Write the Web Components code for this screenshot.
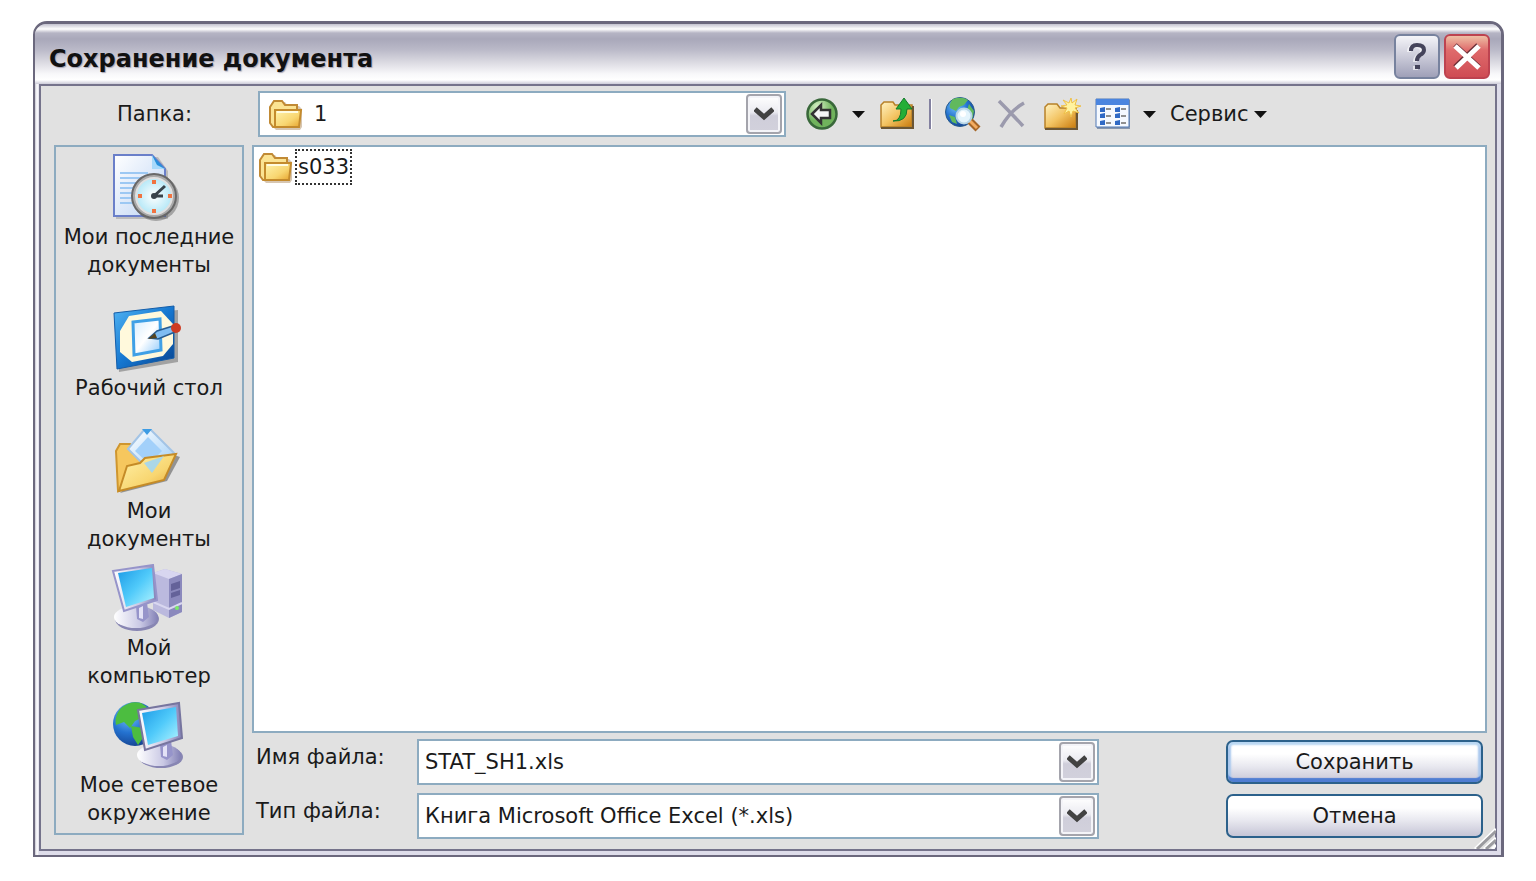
<!DOCTYPE html>
<html lang="ru">

<head>
  <meta charset="UTF-8">
  <meta name="viewport" content="width=device-width, initial-scale=1.0">
  <title>Сохранение документа</title>
  <style>
    body {
      margin: 0;
      padding: 21px 32px 24px 33px;
      box-sizing: border-box;
      min-height: 100vh;
      display: flex;
      background: #fff;
      color: #1a1a1a;
      font: 21px/28px "DejaVu Sans", sans-serif;
    }
  </style>
</head>

<body>
  <xp-dialog>
    <span slot="title">Сохранение документа</span>
    <xp-toolbar slot="toolbar"></xp-toolbar>
    <xp-places slot="places">
      <xp-place icon="recent">Мои последние<br>документы</xp-place>
      <xp-place icon="desktop">Рабочий стол</xp-place>
      <xp-place icon="documents">Мои<br>документы</xp-place>
      <xp-place icon="computer">Мой<br>компьютер</xp-place>
      <xp-place icon="network">Мое сетевое<br>окружение</xp-place>
    </xp-places>
    <xp-file-list slot="files">
      <xp-file>s033</xp-file>
    </xp-file-list>
    <xp-combo slot="fields" label="Имя файла:" value="STAT_SH1.xls" editable></xp-combo>
    <xp-button slot="actions" primary>Сохранить</xp-button>
    <xp-combo slot="fields" label="Тип файла:" value="Книга Microsoft Office Excel (*.xls)"></xp-combo>
    <xp-button slot="actions">Отмена</xp-button>
  </xp-dialog>

  <template id="dialog">
    <style>
      :host {
        flex: 1;
        display: flex;
        flex-direction: column;
        position: relative;
        box-sizing: border-box;
        border: 2px solid #6b687d;
        border-top-width: 3px;
        border-right-width: 3px;
        border-radius: 14px 14px 0 0;
        background: linear-gradient(to right, #c6c5d1, #fff 2px, #deddea 4px);
        padding: 0 4px 4px;
        overflow: hidden;
      }
      header {
        display: flex;
        align-items: center;
        gap: 4px;
        height: 60px;
        box-sizing: border-box;
        margin: 0 -4px;
        padding: 5px 11px 0 14px;
        background: linear-gradient(#c4c3d0, #fff 5px, #b5b4c4 9px, #a9a8ba 15px, #b9b8c7 25px, #dad9e1 38px, #f8f8fa 50px, #fff 56px, #cccbd8);
      }
      h1 {
        flex: 1;
        margin: 0;
        padding-top: 4px;
        font-size: 24px;
        line-height: 30px;
        font-weight: bold;
        color: #111;
        text-shadow: 1px 1px 1px #a3a2b3;
      }
      header button {
        width: 46px;
        height: 45px;
        padding: 0;
        border: 2px solid #77829e;
        border-radius: 6px;
        background: linear-gradient(#f4f4f8, #cfcfdc 45%, #9fa0b8);
      }
      header button.close {
        border-color: #bd4350;
        background: linear-gradient(#eebfa4, #df6a6b 35%, #cf4c54);
      }
      header svg { display: block; margin: auto; }
      main {
        flex: 1;
        display: grid;
        grid-template-columns: 190px 1fr;
        grid-template-rows: auto 1fr;
        column-gap: 8px;
        padding: 5px 8px 10px 13px;
        border: 2px solid #75738b;
        background: #e1e1e1;
      }
      .toolbar { grid-column: 1 / 3; padding-bottom: 8px; }
      .places { display: grid; margin-bottom: 4px; }
      .right { display: flex; flex-direction: column; gap: 6px; }
      .files { flex: 1; display: grid; }
      .bottom {
        display: grid;
        grid-template-columns: 1fr 257px;
        column-gap: 127px;
        padding: 0 4px;
      }
      .fields, .actions { display: flex; flex-direction: column; gap: 8px; }
      .grip { position: absolute; right: 5px; bottom: 6px; }
    </style>
    <header>
      <h1><slot name="title"></slot></h1>
      <button aria-label="Справка">
        <svg width="36" height="36" viewBox="0 0 36 36" fill="none" stroke-width="4">
          <path d="M12 12q0-6 6-6 7 0 7 5 0 3-4 5-3 2-3 6M16 28h5" stroke="#fff" transform="translate(-2 1)" opacity=".6" />
          <path d="M12 12q0-6 6-6 7 0 7 5 0 3-4 5-3 2-3 6M16 28h5" stroke="#45445b" />
        </svg>
      </button>
      <button class="close" aria-label="Закрыть">
        <svg width="36" height="36" viewBox="0 0 36 36" fill="none">
          <path d="M6 6l24 22M29 6L6 28" stroke="#6d3038" stroke-width="5" />
          <path d="M6 7l24 22M30 7L7 29" stroke="#fff" stroke-width="5" />
        </svg>
      </button>
    </header>
    <main>
      <div class="toolbar"><slot name="toolbar"></slot></div>
      <div class="places"><slot name="places"></slot></div>
      <div class="right">
        <div class="files"><slot name="files"></slot></div>
        <div class="bottom">
          <div class="fields"><slot name="fields"></slot></div>
          <div class="actions"><slot name="actions"></slot></div>
        </div>
      </div>
    </main>
    <svg class="grip" width="24" height="22" viewBox="0 0 24 22" fill="none">
      <path d="M3 22L24 2M12 22l12-11M20 22l4-4" stroke="#fff" stroke-width="3" />
      <path d="M5 22L24 4M14 22l10-9" stroke="#9b9b9f" stroke-width="3" />
    </svg>
  </template>

  <template id="toolbar">
    <style>
      :host { display: flex; }
      xp-combo { flex: 1; --label-width: 204px; --label-pad: 0 0 0 63px; --text-pad: 10px; }
      .tools {
        flex: 0 0 701px;
        box-sizing: border-box;
        padding-left: 20px;
        display: flex;
        align-items: center;
      }
      button {
        display: flex;
        align-items: center;
        padding: 0;
        border: 0;
        background: none;
        color: inherit;
        font: inherit;
      }
      .drop { margin-left: 12px; }
      .up { margin-left: 14px; }
      .search { margin-left: 12px; }
      .delete, .views { margin-left: 14px; }
      .new { margin-left: 16px; }
      .service { margin-left: 14px; gap: 6px; }
      hr { width: 1px; height: 30px; margin: 0 0 0 14px; border: solid; border-width: 0 1px; border-color: #fff #fff #fff #8381a0; background: #8381a0; }
    </style>
    <xp-combo label="Папка:" value="1"><xp-icon name="folder"></xp-icon></xp-combo>
    <div class="tools">
      <button aria-label="Назад"><xp-icon name="back"></xp-icon></button>
      <button class="drop" aria-label="Журнал"><xp-icon name="caret"></xp-icon></button>
      <button class="up" aria-label="На уровень вверх"><xp-icon name="up"></xp-icon></button>
      <hr>
      <button class="search" aria-label="Найти в Интернете"><xp-icon name="search"></xp-icon></button>
      <button class="delete" aria-label="Удалить"><xp-icon name="delete"></xp-icon></button>
      <button class="new" aria-label="Создать папку"><xp-icon name="newfolder"></xp-icon></button>
      <button class="views" aria-label="Представления"><xp-icon name="views"></xp-icon></button>
      <button class="drop" aria-label="Вид"><xp-icon name="caret"></xp-icon></button>
      <button class="service">Сервис <xp-icon name="caret"></xp-icon></button>
    </div>
  </template>

  <template id="places">
    <style>
      :host {
        display: grid;
        grid-auto-rows: 1fr;
        align-items: center;
        border: 2px solid #8dabc0;
      }
    </style>
    <slot></slot>
  </template>

  <template id="place">
    <style>
      :host { display: block; }
      button {
        display: flex;
        flex-direction: column;
        align-items: center;
        gap: 2px;
        width: 100%;
        padding: 0 4px;
        border: 0;
        background: none;
        color: inherit;
        font: inherit;
      }
    </style>
    <button><xp-icon></xp-icon><span><slot></slot></span></button>
  </template>

  <template id="file-list">
    <style>
      :host { display: block; border: 2px solid #8dabc0; background: #fff; padding: 2px 4px; }
    </style>
    <slot></slot>
  </template>

  <template id="file">
    <style>
      :host { display: flex; align-items: center; gap: 1px; }
      span { padding: 2px 1px; border: 2px dotted #333; }
    </style>
    <xp-icon name="folder"></xp-icon><span><slot></slot></span>
  </template>

  <template id="combo">
    <style>
      :host { display: flex; height: 46px; }
      label {
        flex: none;
        width: var(--label-width, 161px);
        box-sizing: border-box;
        align-self: center;
        padding: var(--label-pad, 0 0 10px);
      }
      .box {
        flex: 1;
        min-width: 0;
        display: grid;
        grid-template-columns: auto 1fr 38px;
        align-items: center;
        box-sizing: border-box;
        border: 2px solid #8dabc0;
        background: #fff;
      }
      ::slotted(xp-icon) { margin-left: 8px; }
      input, select {
        grid-row: 1;
        grid-column: 2 / 4;
        appearance: none;
        width: 100%;
        height: 100%;
        box-sizing: border-box;
        margin: 0;
        padding: 0 40px 0 var(--text-pad, 6px);
        border: 0;
        outline: 0;
        border-radius: 0;
        background: none;
        color: inherit;
        font: inherit;
      }
      .arrow {
        grid-row: 1;
        grid-column: 3;
        display: grid;
        place-items: center;
        width: 36px;
        height: 40px;
        box-sizing: border-box;
        padding: 0;
        border: 2px solid #a4a4ac;
        border-radius: 4px;
        background: linear-gradient(#fff, #ebebf1 45%, #cfceda 55%, #d2d1dc);
        box-shadow: inset 0 0 0 2px #f4f4f8;
        pointer-events: none;
      }
    </style>
    <label for="field"></label>
    <div class="box">
      <slot></slot>
      <span class="arrow">
        <svg width="20" height="14" viewBox="0 0 20 14"><path d="M1 2l9 8 9-8" fill="none" stroke="#424242" stroke-width="5" /></svg>
      </span>
    </div>
  </template>

  <template id="button">
    <style>
      :host { display: block; padding: 1px 0; }
      button {
        display: block;
        width: 100%;
        height: 44px;
        border: 2px solid #2c618b;
        border-radius: 7px;
        background: linear-gradient(#fff 30%, #e9e9f0 60%, #c6c5d6);
        color: inherit;
        font: inherit;
      }
      :host([primary]) button {
        box-shadow: inset 0 3px 2px #b9d7f3, inset 0 -4px 1px #4f7dd2, inset 3px 0 2px #a9c8ee, inset -3px 0 2px #a9c8ee;
      }
    </style>
    <button><slot></slot></button>
  </template>

  <script>
    // size and drawing of each icon
    const folder = `
      <path d="M4 10V6l3-4h8l3 4h11l3 3v18l-2 3H6l-4-4V10z" fill="#8b5d20" opacity=".35" transform="translate(2 2)"/>
      <path d="M2 9l4-6h8l3 4h12v22H5l-3-4z" fill="#fbe393" stroke="#c18a35" stroke-width="2"/>
      <path d="M7 12h26l-2 17H7z" fill="url(#a)" stroke="#c48b2d" stroke-width="2"/>
      <path d="M9 14h21" stroke="#fffbe0" stroke-width="2"/>`
    const yellow = `<linearGradient id="a" x2="1" y2="1"><stop stop-color="#fff3ad"/><stop offset=".6" stop-color="#f8d671"/><stop offset="1" stop-color="#e6a32c"/></linearGradient>`
    const screen = `<linearGradient id="s" x2="1" y2="1"><stop stop-color="#1b9ae6"/><stop offset=".5" stop-color="#50cafa"/><stop offset="1" stop-color="#b3f5ff"/></linearGradient>
      <linearGradient id="m"><stop stop-color="#fff"/><stop offset=".6" stop-color="#c9c8e4"/><stop offset="1" stop-color="#8280b5"/></linearGradient>`
    const globe = `<radialGradient id="g" cx=".35" cy=".3" r=".8"><stop stop-color="#74c4fa"/><stop offset=".5" stop-color="#2472d0"/><stop offset="1" stop-color="#123a85"/></radialGradient>`
    const orange = `<linearGradient id="o" x2="1" y2="1"><stop stop-color="#fff3c3"/><stop offset=".5" stop-color="#f3c463"/><stop offset="1" stop-color="#c97a0c"/></linearGradient>`

    const icons = {
      caret: [13, 8, `<path d="M0 1h13L6.500 8z" fill="#111"/>`],

      folder: [36, 32, yellow + folder],

      back: [34, 34, `
        <radialGradient id="a" cx=".35" cy=".25"><stop stop-color="#d7f2c8"/><stop offset="1" stop-color="#70b35c"/></radialGradient>
        <circle cx="16" cy="17" r="14.500" fill="url(#a)" stroke="#39683a" stroke-width="2.500"/>
        <path d="M6 17l9-9v5h9v8h-9v5z" fill="#f5f5f5" stroke="#333" stroke-width="2.500"/>`],

      up: [36, 34, orange + `
        <path d="M2 30V8l3-3h9l2 3h17v22z" fill="url(#o)" stroke="#b78128" stroke-width="1.500"/>
        <path d="M2 31h32V9" fill="none" stroke="#6b5635" stroke-width="2"/>
        <path d="M14 24q8 0 8-12h-5l8-11 8 11h-5q0 13-14 12z" fill="#24ae37" stroke="#147a2b"/>`],

      search: [37, 36, globe + `
        <circle cx="16" cy="16" r="14.500" fill="url(#g)" stroke="#295d8d"/>
        <path d="M9 3q9-3 15 1l-4 5-5 2-3 4-6-3q-1-5 3-9zM25 8l5 7-2 10-6-8zM5 19l6 2 2 7-5-2z" fill="#61b95d"/>
        <path d="M26 25l8 8" stroke="#a56627" stroke-width="7"/>
        <path d="M26 25l7 7" stroke="#f3ac60" stroke-width="3"/>
        <circle cx="20" cy="20" r="7.500" fill="#e4f4fc" stroke="#b8d6e6" stroke-width="2"/>
        <circle cx="19" cy="18" r="3" fill="#fff"/>`],

      delete: [32, 34, `<path d="M4 4q11 11 24 25M29 6Q16 13 6 30" fill="none" stroke="#9b9aad" stroke-width="3.500"/>`],

      newfolder: [38, 34, orange + `
        <path d="M2 31V10l3-3h9l3 4h16v20z" fill="url(#o)" stroke="#b78128" stroke-width="1.500"/>
        <path d="M2 32h32V13" fill="none" stroke="#6b5635" stroke-width="2"/>
        <path d="M28 1l1 5 5-4-2 6 6 1-6 2 4 5-6-2-2 6-2-6-5 3 3-6-6-2 6-1-4-5 6 3z" fill="#fff3a0" stroke="#eebf47"/>`],

      views: [36, 32, `
        <path d="M2 2h33v29H2z" fill="#8796ad"/>
        <path d="M1 1h33v28H1z" fill="#f5f9ff" stroke="#5179b5"/>
        <path d="M1 1h33v6H1z" fill="#4b85df"/>
        <g fill="#2f69c5"><path d="M5 10l5-1v5H5zM20 10l5-1v5h-5zM5 16l5-1v5H5zM20 16l5-1v5h-5zM5 23l5-1v5H5zM20 23l5-1v5h-5z"/></g>
        <path d="M11 11h5m10 0h5M11 18h5m10 0h5M11 25h5m10 0h5" stroke="#909090" stroke-width="2"/>`],

      recent: [78, 68, `
        <linearGradient id="a" x2="1" y2="1"><stop stop-color="#fff"/><stop offset="1" stop-color="#bdd4f4"/></linearGradient>
        <radialGradient id="b"><stop stop-color="#fff"/><stop offset="1" stop-color="#b5e8f7"/></radialGradient>
        <path d="M6 4h42l10 14v48H6z" fill="#666" opacity=".3"/>
        <path d="M4 2h38l13 14v47H4z" fill="url(#a)" stroke="#6a7fc9" stroke-width="2"/>
        <path d="M42 2l13 14H42z" fill="#278fdb"/><path d="M42 2l5 10 8 4H42z" fill="#a7d9fb"/>
        <path d="M10 20h28M10 25h22M10 30h17M10 35h14M10 40h14M10 45h15M10 50h18" stroke="#9cc8f3" stroke-width="2"/>
        <circle cx="46" cy="45" r="23" fill="#333" opacity=".35"/>
        <circle cx="44" cy="43" r="22" fill="#aaa" stroke="#686868" stroke-width="2"/>
        <circle cx="44" cy="43" r="18" fill="url(#b)" stroke="#e0e0e0" stroke-width="2"/>
        <path d="M44 43l11-10M44 43h9" stroke="#38434b" stroke-width="3"/><circle cx="44" cy="43" r="3" fill="#38434b"/>
        <path d="M42 29h4M42 58h4M28 43h4M58 43h4" stroke="#f17340" stroke-width="4"/>`],

      desktop: [78, 68, `
        <linearGradient id="a" x2="1" y2="1"><stop stop-color="#51b5f4"/><stop offset=".5" stop-color="#1677d0"/><stop offset="1" stop-color="#07438f"/></linearGradient>
        <linearGradient id="b" x2="1" y2="1"><stop stop-color="#d3ecff"/><stop offset=".5" stop-color="#fff"/><stop offset="1" stop-color="#8cc8fb"/></linearGradient>
        <path d="M7 12L68 6v52L9 68z" fill="#444" opacity=".4"/>
        <path d="M4 9l60-7v52L7 65z" fill="url(#a)" stroke="#145da9"/>
        <path d="M19 12l32-5 12 13v20l-10 12-31 6L10 48V27z" fill="#fff9dc"/>
        <path d="M23 18l27-3 1 31-27 5z" fill="url(#b)" stroke="#3fa0e6" stroke-width="3"/>
        <path d="M39 34l8-7 16-5 2 6-17 7z" fill="#7fbdf2" stroke="#285c8f" stroke-width="1.500"/>
        <path d="M38 35l7-6 2 5z" fill="#55431f"/><circle cx="66" cy="24" r="5" fill="#ce3b22"/>`],

      documents: [78, 68, yellow + `
        <linearGradient id="b" x2="1" y2="1"><stop stop-color="#fff"/><stop offset="1" stop-color="#9bccf8"/></linearGradient>
        <path d="M10 66l47-12L70 30l-6-2-50 34z" fill="#444" opacity=".5"/>
        <path d="M8 64L6 24l4-7h10l6 5 14 20z" fill="#f6c75e" stroke="#cf962f" stroke-width="2"/>
        <path d="M18 22L34 3h7l23 23-22 20z" fill="url(#b)" stroke="#a3c4e6" stroke-width="2"/>
        <path d="M38 10l14 14-13 13-14-13z" fill="#a2d0fa"/><path d="M32 2h10l-5 6z" fill="#3d9ce4"/>
        <path d="M9 64l8-25 13-3 5-5 31-4-12 26z" fill="url(#a)" stroke="#c58b27" stroke-width="2"/>
        <path d="M34 36l20-7-12 17z" fill="#a2d6f2" opacity=".9"/>`],

      computer: [76, 68, screen + `
        <path d="M42 9l12-4 17 5v38L58 54 42 46z" fill="#bbb9de"/>
        <path d="M42 9l12-4 17 5-13 5z" fill="#d8d6f0"/>
        <path d="M58 15l13-5v38l-13 6z" fill="#8b89bd"/>
        <path d="M60 20l9-3v7l-9 3zM60 29l9-3v5l-9 3z" fill="#646299"/><path d="M42 38l16 7 13-6" fill="none" stroke="#d9d7f0" stroke-width="2"/><circle cx="66" cy="44" r="2" fill="#7bea68"/>
        <ellipse cx="26" cy="55" rx="22" ry="12" fill="#8886b3"/><ellipse cx="25" cy="53" rx="22" ry="11" fill="url(#m)"/>
        <path d="M25 42l11-3 2 14-6 5-6-3z" fill="#9694ca"/><path d="M28 44l4-2v13l-4-1z" fill="#e3e2f6"/>
        <path d="M2 7l40-6 4 35-33 11z" fill="url(#m)" stroke="#9694ca" stroke-width="2"/>
        <path d="M7 9l34-5 2 30-28 9z" fill="url(#s)"/>`],

      network: [74, 68, screen + globe + `
        <circle cx="23" cy="23" r="22" fill="url(#g)"/>
        <path d="M9 7q10-8 20-5l6 4-9 5 3 6-6 3-5 7-6-6-8 3q-2-9 5-17zM19 25l12 2 2 7-7 10-5-8z" fill="#4cbd40"/>
        <ellipse cx="49" cy="56" rx="22" ry="11" fill="#8886b3"/><ellipse cx="47" cy="54" rx="22" ry="11" fill="url(#m)"/>
        <path d="M48 43l11-3 2 14-6 5-6-3z" fill="#9694ca"/><path d="M51 46l4-2v12l-4-1z" fill="#e3e2f6"/>
        <path d="M26 9l41-7 3 35-37 12z" fill="url(#m)" stroke="#77759f" stroke-width="2"/>
        <path d="M30 12l34-6 2 29-30 9z" fill="url(#s)"/>`],
    }

    const attach = (host, id) => {
      const root = host.attachShadow({ mode: "open" })
      root.appendChild(document.getElementById(id).content.cloneNode(true))
      return root
    }

    customElements.define("xp-icon", class extends HTMLElement {
      static observedAttributes = ["name"]

      constructor() {
        super()
        this.attachShadow({ mode: "open" })
      }

      attributeChangedCallback(attr, old, name) {
        const [w, h, body] = icons[name]
        this.shadowRoot.innerHTML = `
          <style>:host { display: block; flex: none; } svg { display: block; }</style>
          <svg width="${w}" height="${h}" viewBox="0 0 ${w} ${h}" aria-hidden="true">${body}</svg>`
      }
    })

    customElements.define("xp-combo", class extends HTMLElement {
      connectedCallback() {
        if (this.shadowRoot) return
        const root = attach(this, "combo")
        const value = this.getAttribute("value")
        root.querySelector("label").textContent = this.getAttribute("label")

        let field
        if (this.hasAttribute("editable")) {
          field = document.createElement("input")
          field.type = "text"
          field.value = value
        } else {
          field = document.createElement("select")
          field.add(new Option(value))
        }
        field.id = "field"
        root.querySelector(".arrow").before(field)
      }
    })

    customElements.define("xp-place", class extends HTMLElement {
      connectedCallback() {
        if (this.shadowRoot) return
        const root = attach(this, "place")
        root.querySelector("xp-icon").setAttribute("name", this.getAttribute("icon"))
      }
    })

    // elements that are only markup and styles
    for (const name of ["dialog", "toolbar", "places", "file-list", "file", "button"]) {
      customElements.define("xp-" + name, class extends HTMLElement {
        constructor() {
          super()
          attach(this, name)
        }
      })
    }
  </script>
</body>

</html>
